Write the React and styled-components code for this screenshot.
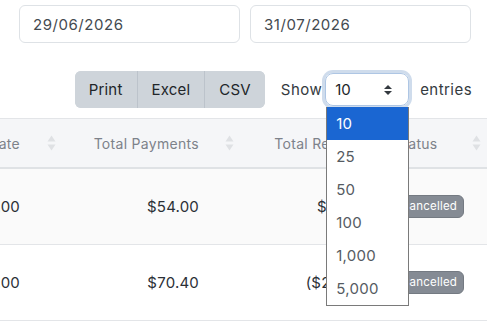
import React, { useLayoutEffect, useRef } from "react";
import styled, { createGlobalStyle } from "styled-components";

const GlobalStyle = createGlobalStyle`
  html, body {
    margin: 0;
    padding: 0;
    background: #ffffff;
    font-family: Inter, "Noto Sans", sans-serif;
    color: #212529;
    overflow: hidden;
  }
`;

const Page = styled.div`
  width: 487px;
  height: 325px;
  overflow: hidden;
`;

const DateRow = styled.div`
  display: grid;
  grid-template-columns: 1fr 1fr;
  gap: 10px;
  padding: 5px 16px 0 19px;
`;

const DateInput = styled.div`
  height: 36px;
  border: 1px solid #dee2e6;
  border-radius: 6px;
  display: flex;
  align-items: center;
  padding-left: 13px;
  font-size: 15px;
  letter-spacing: 0.55px;
  color: #444a50;
`;

const Toolbar = styled.div`
  display: flex;
  justify-content: flex-end;
  align-items: center;
  padding: 28px 15px 0 0;
  height: 37px;
`;

const ButtonGroup = styled.div`
  display: flex;
  height: 37px;
  border-radius: 6px;
  overflow: hidden;
  background: #ced4da;
  margin-right: 16px;
`;

const GroupButton = styled.button`
  border: none;
  background: #ced4da;
  font-family: inherit;
  font-size: 15px;
  letter-spacing: 0.2px;
  color: #212529;
  padding: 0 ${(p) => p.$pad}px;
  border-left: ${(p) => (p.$first ? "none" : "1px solid #bcc3cb")};
`;

const Label = styled.span`
  font-size: 15px;
  letter-spacing: 0.45px;
  color: #343a40;
`;

const SelectWrap = styled.div`
  position: relative;
  margin: 0 11px 0 3px;
`;

const SelectBox = styled.div`
  width: 84px;
  height: 33px;
  box-sizing: border-box;
  border: 1px solid #aec6e4;
  border-radius: 8px;
  box-shadow: 0 0 0 3px #cfdcec;
  display: flex;
  align-items: center;
  justify-content: space-between;
  padding: 0 15px 0 9px;
  font-size: 15px;
  color: #212529;
`;

const DropList = styled.ul`
  position: absolute;
  top: 34px;
  left: 1px;
  width: 83px;
  box-sizing: border-box;
  margin: 0;
  padding: 0;
  list-style: none;
  background: #ffffff;
  border: 1px solid #7a7a7a;
  border-top: none;
  z-index: 5;
`;

const DropItem = styled.li`
  height: 33px;
  display: flex;
  align-items: center;
  padding-left: 9px;
  font-size: 15px;
  letter-spacing: 0.3px;
  color: ${(p) => (p.$active ? "#ffffff" : "#555b62")};
  background: ${(p) => (p.$active ? "#1a66d2" : "transparent")};
`;

const TableScroll = styled.div`
  margin-top: 10px;
  width: 487px;
  overflow-x: auto;
  scrollbar-width: none;
  &::-webkit-scrollbar {
    display: none;
  }
`;

const Table = styled.table`
  border-collapse: collapse;
  table-layout: fixed;
  width: ${(p) => p.$width}px;
`;

const HeadRow = styled.tr`
  background: #f5f6f8;
  border-top: 1px solid #e3e5e8;
  border-bottom: 2px solid #dfe2e5;
`;

const Th = styled.th`
  position: relative;
  height: 48px;
  padding: 0 ${(p) => p.$pr}px 0 ${(p) => p.$pl}px;
  text-align: ${(p) => p.$align};
  font-weight: 400;
  font-size: 14px;
  letter-spacing: 0.3px;
  color: #7d828a;
  white-space: nowrap;
`;

const SortIcon = styled.svg`
  position: absolute;
  right: ${(p) => p.$right}px;
  top: 50%;
  transform: translateY(-50%);
`;

const BodyRow = styled.tr`
  background: ${(p) => (p.$striped ? "#fafafa" : "#ffffff")};
  border-bottom: 1px solid #e3e5e8;
`;

const Td = styled.td`
  height: 75px;
  padding: 0 ${(p) => p.$pr}px 0 ${(p) => p.$pl}px;
  text-align: ${(p) => p.$align};
  font-size: 15px;
  letter-spacing: 0.2px;
  color: #2b3036;
  white-space: nowrap;
`;

const Badge = styled.span`
  display: inline-block;
  background: #858b94;
  color: #ffffff;
  font-size: 11.5px;
  line-height: 21px;
  padding: 0 6px;
  border: 1px solid #747a82;
  border-radius: 6px;
`;

const columns = [
  { key: "guest", title: "Guest", width: 150, align: "left", pl: 12, pr: 30, icon: 10 },
  { key: "rate", title: "Room Rate", width: 150, align: "right", pl: 12, pr: 41, icon: 5 },
  { key: "payments", title: "Total Payments", width: 179, align: "right", pl: 12, pr: 41, icon: 6 },
  { key: "refunds", title: "Total Refunds", width: 141, align: "right", pl: 12, pr: 12, icon: 4 },
  { key: "status", title: "Status", width: 106, align: "left", pl: 13, pr: 30, icon: 6 },
];

const rows = [
  { guest: "Jordan Blake", rate: "$54.00", payments: "$54.00", refunds: "$54.00", status: "Cancelled" },
  { guest: "Maria Santos", rate: "$92.00", payments: "$70.40", refunds: "($22.00)", status: "Cancelled" },
];

const pageSizes = ["10", "25", "50", "100", "1,000", "5,000"];

function Sorter({ right }) {
  return (
    <SortIcon $right={right} width="9" height="17" viewBox="0 0 9 17">
      <path d="M4.5 1 L8.5 7 L0.5 7 Z" fill="#dfe1e4" />
      <path d="M4.5 16 L8.5 10 L0.5 10 Z" fill="#dfe1e4" />
    </SortIcon>
  );
}

function Caret() {
  return (
    <svg width="10" height="12" viewBox="0 0 10 12">
      <path d="M5 1 L9 5 L1 5 Z" fill="#343a40" />
      <path d="M5 11 L9 7 L1 7 Z" fill="#343a40" />
    </svg>
  );
}

export default function App() {
  const scrollRef = useRef(null);
  const tableWidth = columns.reduce((sum, c) => sum + c.width, 0);

  useLayoutEffect(() => {
    const el = scrollRef.current;
    if (el) el.scrollLeft = el.scrollWidth;
  }, []);

  return (
    <Page>
      <GlobalStyle />
      <DateRow>
        <DateInput>29/06/2026</DateInput>
        <DateInput>31/07/2026</DateInput>
      </DateRow>

      <Toolbar>
        <ButtonGroup>
          <GroupButton $first $pad={14}>Print</GroupButton>
          <GroupButton $pad={14}>Excel</GroupButton>
          <GroupButton $pad={14}>CSV</GroupButton>
        </ButtonGroup>
        <Label>Show</Label>
        <SelectWrap>
          <SelectBox>
            <span>10</span>
            <Caret />
          </SelectBox>
          <DropList>
            {pageSizes.map((size, i) => (
              <DropItem key={size} $active={i === 0}>
                {size}
              </DropItem>
            ))}
          </DropList>
        </SelectWrap>
        <Label>entries</Label>
      </Toolbar>

      <TableScroll ref={scrollRef}>
        <Table $width={tableWidth}>
          <colgroup>
            {columns.map((c) => (
              <col key={c.key} style={{ width: c.width }} />
            ))}
          </colgroup>
          <thead>
            <HeadRow>
              {columns.map((c) => (
                <Th key={c.key} $align={c.align} $pl={c.pl} $pr={c.pr}>
                  {c.title}
                  <Sorter right={c.icon} />
                </Th>
              ))}
            </HeadRow>
          </thead>
          <tbody>
            {rows.map((r, i) => (
              <BodyRow key={i} $striped={i === 0}>
                {columns.map((c) => (
                  <Td key={c.key} $align={c.align} $pl={c.pl} $pr={c.pr}>
                    {c.key === "status" ? <Badge>{r.status}</Badge> : r[c.key]}
                  </Td>
                ))}
              </BodyRow>
            ))}
          </tbody>
        </Table>
      </TableScroll>
    </Page>
  );
}
